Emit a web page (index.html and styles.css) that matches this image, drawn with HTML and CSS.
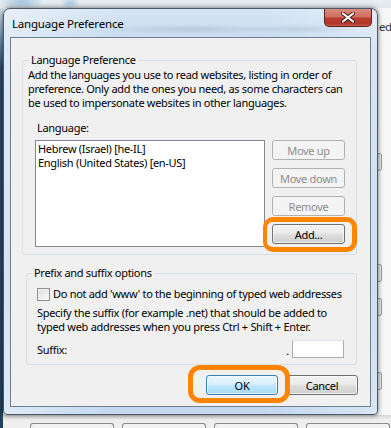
FILE: index.html
```html
<!DOCTYPE html>
<html>
  <head>
    <title>Language Preference</title>
    <meta name="viewport" content="width=device-width,initial-scale=1">
    <link rel="stylesheet" href="styles.css">
  </head>
  <body>
    <div class="screen">
      <div class="desktop-top"></div>
      <div class="desktop-left"></div>

      <div class="window">
        <div class="titlebar">
          <span class="window-title">Language Preference</span>
          <div class="close-button">
            <svg width="16" height="11" viewBox="0 0 16 11">
              <path d="M3 1.5 L13 9.5 M13 1.5 L3 9.5" stroke="#4a1c16" stroke-width="4" stroke-linecap="round"/>
              <path d="M3 1.5 L13 9.5 M13 1.5 L3 9.5" stroke="#ffffff" stroke-width="2.2" stroke-linecap="round"/>
            </svg>
          </div>
        </div>

        <div class="client">
          <fieldset class="group group-lang">
            <legend>Language Preference</legend>
            <p class="intro">Add the languages you use to read websites, listing in order of<br>preference. Only add the ones you need, as some characters can<br>be used to impersonate websites in other languages.</p>
            <div class="field-label">Language:</div>
            <div class="lang-row">
              <div class="listbox">
                <div class="list-item">Hebrew (Israel) [he-IL]</div>
                <div class="list-item">English (United States) [en-US]</div>
              </div>
              <div class="side-buttons">
                <button class="btn" disabled>Move up</button>
                <button class="btn" disabled>Move down</button>
                <button class="btn" disabled>Remove</button>
                <div class="marked marked-add">
                  <button class="btn">Add...</button>
                </div>
              </div>
            </div>
          </fieldset>

          <fieldset class="group group-suffix">
            <legend>Prefix and suffix options</legend>
            <label class="check-row">
              <span class="checkbox"></span>
              <span>Do not add 'www' to the beginning of typed web addresses</span>
            </label>
            <p class="suffix-help">Specify the suffix (for example .net) that should be added to<br>typed web addresses when you press Ctrl + Shift + Enter.</p>
            <div class="suffix-row">
              <span>Suffix:</span>
              <span class="dot">.</span>
              <input type="text" class="suffix-input">
            </div>
          </fieldset>

          <div class="dialog-buttons">
            <div class="marked marked-ok">
              <button class="btn btn-default">OK</button>
            </div>
            <button class="btn">Cancel</button>
          </div>
        </div>
      </div>

      <div class="page-right">
        <span class="page-word">ed</span>
        <span class="page-tab tab1"></span>
        <span class="page-tab tab2"></span>
        <span class="page-tab tab3"></span>
        <span class="page-tab tab4"></span>
      </div>

      <div class="page-bottom">
        <span class="page-button"></span>
        <span class="page-button"></span>
        <span class="page-button"></span>
        <span class="page-button"></span>
      </div>
    </div>
  </body>
</html>
```

FILE: styles.css
```css
html, body {
  margin: 0;
  width: 391px;
  height: 428px;
  overflow: hidden;
  font-family: "Noto Sans", "Open Sans", sans-serif;
  font-size: 11px;
  letter-spacing: -0.3px;
  color: #000;
}
.screen {
  display: grid;
  grid-template-columns: 3px 375px 1fr;
  grid-template-rows: 8px 407px 1fr;
  height: 428px;
  background: #efefef;
}
.desktop-top {
  grid-column: 1 / -1;
  grid-row: 1;
  background:
    radial-gradient(ellipse 22px 8px at 22px 2px, rgba(120, 170, 210, 0.6), transparent),
    radial-gradient(ellipse 10px 6px at 70px 3px, rgba(120, 170, 210, 0.5), transparent),
    linear-gradient(#e6edf3, #dfe6ec);
}
.desktop-left {
  grid-column: 1;
  grid-row: 2 / 4;
  background: linear-gradient(#d4e2ee 0, #6f8fae 30px, #2b4966 60px, #22405c 100%);
}

/* window frame */
.window {
  grid-column: 2;
  grid-row: 2;
  display: flex;
  flex-direction: column;
  border: 1px solid #4b5868;
  border-radius: 7px 7px 4px 4px;
  padding: 0 6px 7px 6px;
  background:
    linear-gradient(90deg, rgba(255,255,255,0.45), rgba(255,255,255,0) 30%, rgba(255,255,255,0) 70%, rgba(255,255,255,0.35)),
    linear-gradient(#d6e5f4, #c3d8ee 40px, #b6cfe9 70%, #c4d9ef);
  box-shadow: 0 0 5px rgba(0, 0, 0, 0.55);
  position: relative;
  z-index: 1;
}
.titlebar {
  height: 28px;
  display: flex;
  align-items: flex-start;
  background:
    radial-gradient(ellipse 90px 5px at 180px 20px, rgba(90, 110, 130, 0.18), transparent),
    radial-gradient(ellipse 60px 5px at 290px 20px, rgba(90, 110, 130, 0.15), transparent);
}
.window-title {
  font-size: 11.5px;
  letter-spacing: -0.2px;
  line-height: 16px;
  margin: 7px 0 0 2px;
  color: #000;
}
.close-button {
  margin-left: auto;
  margin-right: -1px;
  width: 46px;
  height: 17px;
  flex: none;
  border: 1px solid #5e231c;
  border-top: none;
  border-radius: 0 0 5px 5px;
  background: linear-gradient(#d98b7e 0%, #cf6f60 45%, #b93c2f 55%, #b0372b 85%, #c65a4b 100%);
  display: flex;
  align-items: center;
  justify-content: center;
}
.close-button svg {
  display: block;
}

/* client area */
.client {
  flex: 1;
  border: 1px solid #6f7f92;
  background: #f0f0f0;
  display: flex;
  flex-direction: column;
}
.group {
  border: 1px solid #d5dfe5;
  border-radius: 3px;
  margin: 0;
  min-width: 0;
}
.group legend {
  padding: 0 2px;
  line-height: 16px;
}
.group-lang {
  margin: 14px 13px 0 11px;
  padding: 0 8px 7px 5px;
}
.group-lang legend {
  margin-left: 1px;
}
.intro {
  margin: 0;
  line-height: 14px;
  white-space: nowrap;
}
.field-label {
  margin: 11px 0 0 9px;
  line-height: 14px;
}
.lang-row {
  display: flex;
  gap: 7px;
  margin: 5px 0 0 7px;
}
.listbox {
  width: 230px;
  height: 107px;
  box-sizing: border-box;
  border: 1px solid #828790;
  background: #fff;
  padding: 1px 2px;
}
.list-item {
  line-height: 14px;
  white-space: nowrap;
}
.side-buttons {
  display: flex;
  flex-direction: column;
  gap: 8px;
}
.btn {
  width: 73px;
  height: 20px;
  padding: 0;
  font-family: inherit;
  font-size: 11px;
  letter-spacing: -0.3px;
  color: #000;
  border: 1px solid #707070;
  border-radius: 3px;
  background: linear-gradient(#f2f2f2 0, #ebebeb 45%, #dddddd 55%, #cfcfcf 100%);
  box-shadow: inset 0 0 0 1px rgba(255, 255, 255, 0.7);
}
.btn:disabled {
  color: #8d8d8d;
  border-color: #adb2b5;
  background: #f4f4f4;
  box-shadow: none;
}
.btn-default {
  border-color: #3c7fb1;
  background: linear-gradient(#eaf6fd 0, #d9f0fc 45%, #bee6fd 55%, #a7d9f5 100%);
  box-shadow: inset 0 0 0 1px rgba(255, 255, 255, 0.6);
}

/* orange annotation marks */
.marked {
  position: relative;
}
.marked::after {
  content: "";
  position: absolute;
  border: 4px solid #ff8400;
  pointer-events: none;
}
.marked-add::after {
  left: -9px;
  right: -12px;
  top: -7px;
  bottom: -8px;
  border-width: 5px 5px 5px 4px;
  border-radius: 10px;
}
.marked-ok::after {
  left: -18px;
  right: -12px;
  top: -10px;
  bottom: -8px;
  border-width: 5px;
  border-radius: 12px;
}
.marked .btn {
  display: block;
}

.group-suffix {
  margin: 10px 13px 0 15px;
  padding: 0 12px 6px 10px;
}
.group-suffix legend {
  margin-left: -5px;
}
.check-row {
  display: flex;
  align-items: center;
  gap: 3px;
  margin-top: 6px;
  line-height: 14px;
  white-space: nowrap;
}
.checkbox {
  flex: none;
  width: 11px;
  height: 11px;
  border: 1px solid #8e8f8f;
  background: linear-gradient(135deg, #dcdcdc, #fbfbfb);
  box-shadow: inset 0 0 0 1px #f4f4f4;
}
.suffix-help {
  margin: 5px 0 0 0;
  line-height: 14px;
  white-space: nowrap;
}
.suffix-row {
  display: flex;
  align-items: center;
  margin-top: 6px;
}
.dot {
  margin-left: auto;
  margin-right: 3px;
  align-self: flex-end;
  line-height: 14px;
}
.suffix-input {
  width: 52px;
  height: 18px;
  box-sizing: border-box;
  border: 1px solid #abadb3;
  border-top-color: #e2e3ea;
  background: #fff;
  padding: 0;
}

.dialog-buttons {
  display: flex;
  justify-content: flex-end;
  gap: 8px;
  margin: 10px 12px 0 0;
}
.dialog-buttons .btn {
  width: 72px;
}

/* page behind the dialog */
.page-right {
  grid-column: 3;
  grid-row: 2;
  display: flex;
  flex-direction: column;
  background: #f6f6f6;
  overflow: hidden;
}
.page-word {
  font-size: 11.5px;
  letter-spacing: -0.4px;
  line-height: 16px;
  margin: 11px 0 0 1px;
  color: #333;
}
.page-tab {
  width: 3px;
  height: 16px;
  border: 1px solid #a0a0a0;
  border-left: none;
  border-radius: 0 3px 3px 0;
  background: #e8e8e8;
}
.tab1 { margin-top: 118px; }
.tab2 { margin-top: 93px; }
.tab3 { margin-top: 16px; }
.tab4 { margin-top: 56px; }
.page-bottom {
  grid-column: 2 / 4;
  grid-row: 3;
  display: flex;
  gap: 8px;
  padding: 8px 0 0 27px;
  background: linear-gradient(#d8d8d8, #efefef 5px);
}
.page-button {
  width: 82px;
  height: 10px;
  border: 1px solid #8a8a8a;
  border-bottom: none;
  border-radius: 3px 3px 0 0;
  background: #f2f2f2;
}
```
